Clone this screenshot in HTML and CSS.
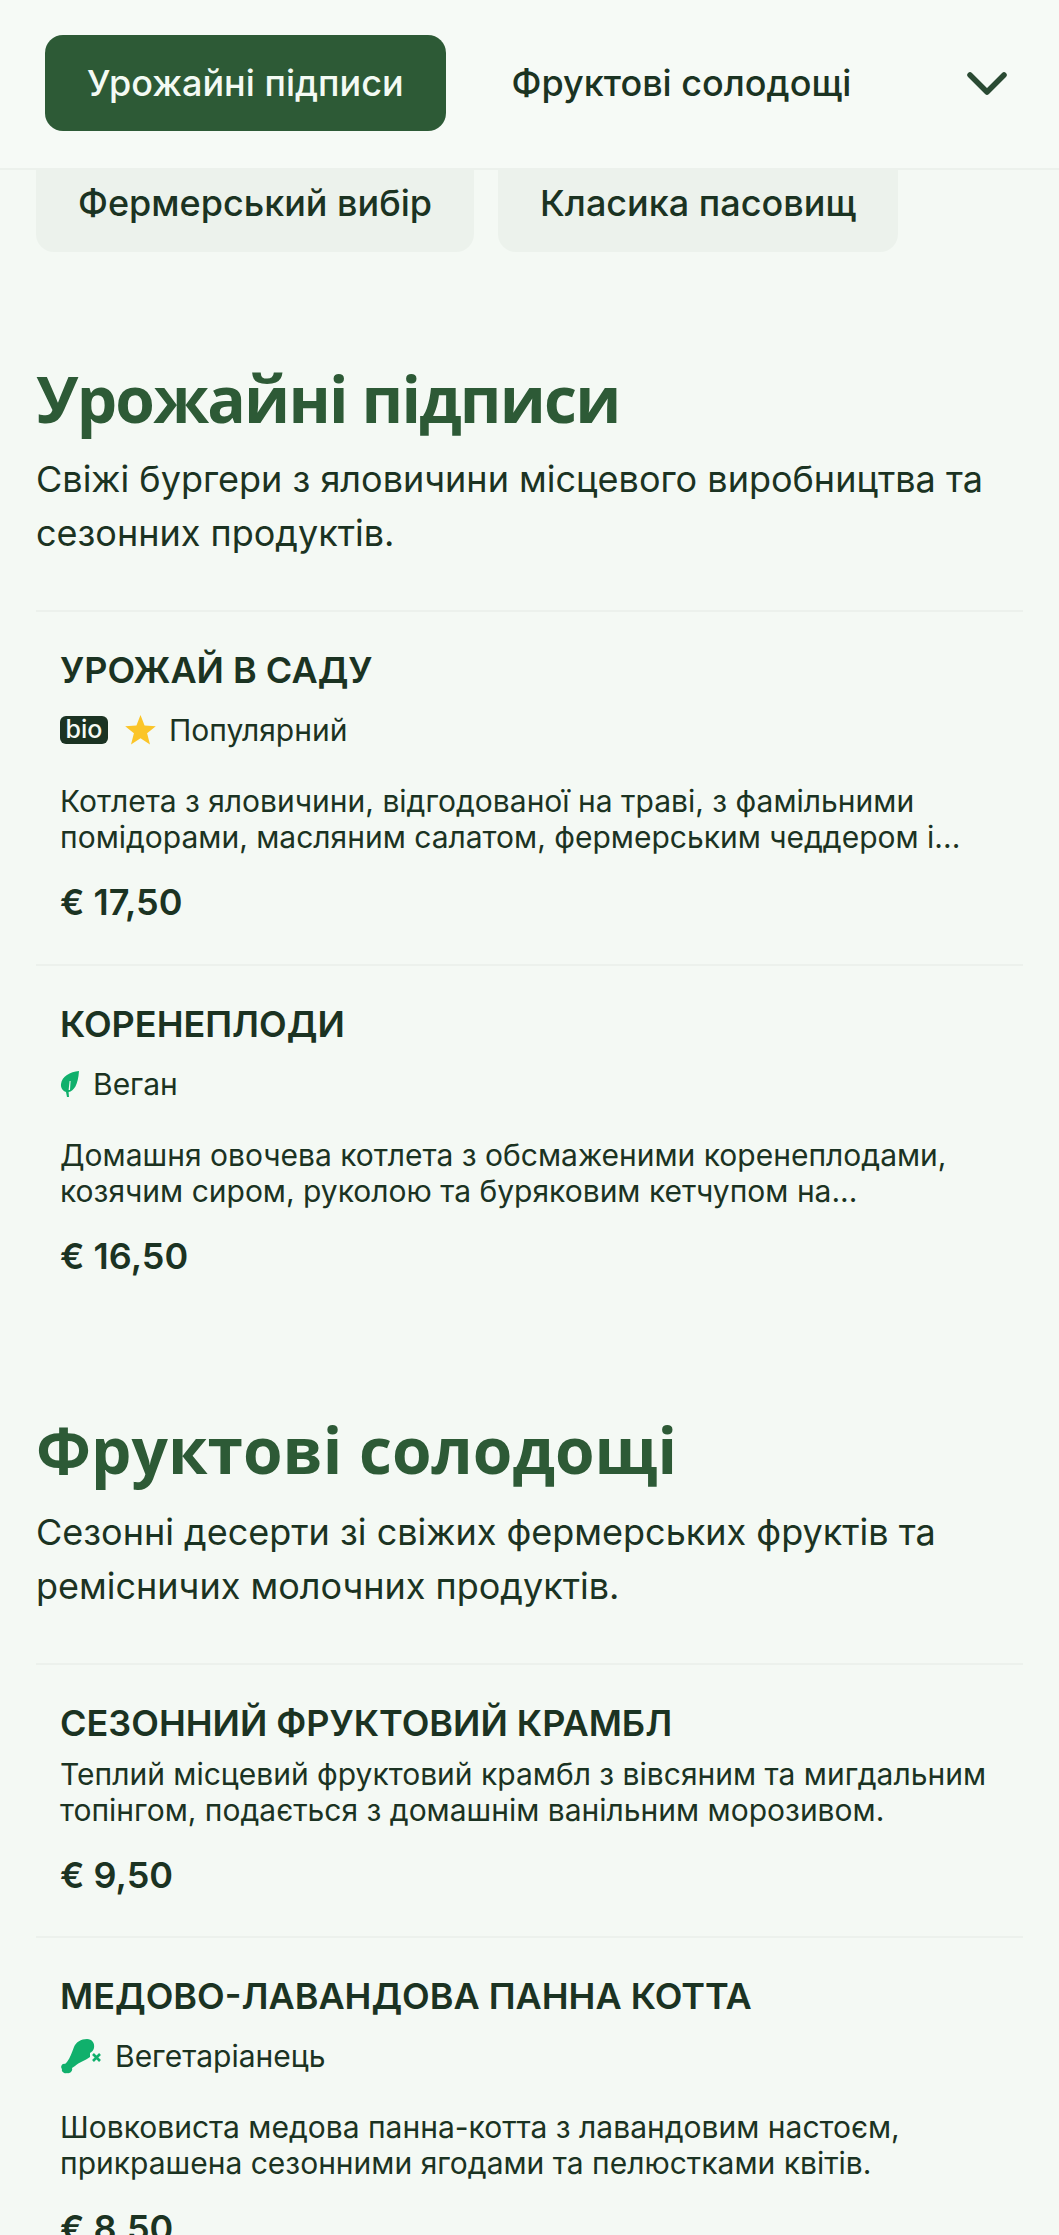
FILE: index.html
```html
<!DOCTYPE html>
<html lang="uk">
<head>
<meta charset="utf-8">
<title>Меню</title>
<link rel="stylesheet" href="styles.css">
</head>
<body>
<header class="topbar">
  <nav class="topnav">
    <a class="pill pill-active">Урожайні підписи</a>
    <a class="pill">Фруктові солодощі</a>
  </nav>
  <button class="chevron-btn" aria-label="Більше">
    <svg class="chevron" viewBox="0 0 40 23" width="40" height="23"><path d="M3 3 L20 20 L37 3" fill="none" stroke="#2a4a33" stroke-width="5.5" stroke-linecap="round" stroke-linejoin="round"/></svg>
  </button>
</header>
<div class="subtabs">
  <a class="subtab">Фермерський вибір</a>
  <a class="subtab">Класика пасовищ</a>
</div>
<main class="menu">
  <section class="section">
    <h2 class="section-title section-title-tight">Урожайні підписи</h2>
    <p class="section-desc">Свіжі бургери з яловичини місцевого виробництва та сезонних продуктів.</p>
    <article class="item">
      <h3 class="item-title">Урожай в саду</h3>
      <div class="tags">
        <span class="bio">bio</span>
        <span class="tag">
          <svg class="icon-star" viewBox="0 0 32 32" width="31" height="32"><path d="M16 0.500 L20.2 11.4 L31.8 12.2 L22.8 19.4 L25.8 31 L16 24.6 L6.200 31 L9.2 19.4 L0.200 12.2 L11.8 11.4 Z" fill="#fbc528"/></svg>
          Популярний
        </span>
      </div>
      <p class="item-desc">Котлета з яловичини, відгодованої на траві, з фамільними помідорами, масляним салатом, фермерським чеддером і...</p>
      <p class="price">€ 17,50</p>
    </article>
    <article class="item">
      <h3 class="item-title">Коренеплоди</h3>
      <div class="tags">
        <span class="tag">
          <svg class="icon-leaf" viewBox="0 0 20 28" width="20" height="28"><path d="M19 1 C10 2 2 6 1 14 C0.5 18 3 21 6 22 L7 27 L9 27 L8.6 22 C14 21 18 15 19 1 Z M8.6 20 L9.6 11 L10.6 11 L10 20 Z" fill="#10b06c" fill-rule="evenodd"/></svg>
          Веган
        </span>
      </div>
      <p class="item-desc">Домашня овочева котлета з обсмаженими коренеплодами, козячим сиром, руколою та буряковим кетчупом на...</p>
      <p class="price">€ 16,50</p>
    </article>
  </section>
  <section class="section">
    <h2 class="section-title">Фруктові солодощі</h2>
    <p class="section-desc">Сезонні десерти зі свіжих фермерських фруктів та ремісничих молочних продуктів.</p>
    <article class="item">
      <h3 class="item-title">Сезонний фруктовий крамбл</h3>
      <p class="item-desc item-desc-tight">Теплий місцевий фруктовий крамбл з вівсяним та мигдальним топінгом, подається з домашнім ванільним морозивом.</p>
      <p class="price price-tight">€ 9,50</p>
    </article>
    <article class="item">
      <h3 class="item-title">Медово-лавандова панна котта</h3>
      <div class="tags">
        <span class="tag">
          <svg class="icon-meat" viewBox="0 0 42 36" width="42" height="36"><path d="M27 1 C32 1 35 5 34 10 C33.500 12 32 14 30 15 L30 19 C25 23 19 24 15 28 L12 30 C13 33 10 36 7 35 C5 36 1 34 2 31 C0 29 2 25 5 26 L7 24 C10 20 12 14 14 9 C16 4 21 1 27 1 Z" fill="#10b06c"/><path d="M33 16 L40 23 M40 16 L33 23" stroke="#10b06c" stroke-width="2.6" fill="none"/></svg>
          Вегетаріанець
        </span>
      </div>
      <p class="item-desc">Шовковиста медова панна-котта з лавандовим настоєм, прикрашена сезонними ягодами та пелюстками квітів.</p>
      <p class="price">€ 8,50</p>
    </article>
  </section>
</main>
</body>
</html>
```

FILE: styles.css
```css
* { box-sizing: border-box; }
html, body {
  margin: 0;
  padding: 0;
  height: 100vh;
  overflow: hidden;
  background: #f4f9f4;
  font-family: Inter, "Liberation Sans", sans-serif;
  color: #1b3322;
}
.topbar {
  height: 170px;
  display: flex;
  align-items: center;
  justify-content: space-between;
  padding: 0 52px 2px 45px;
  background: #f6faf6;
  border-bottom: 2px solid #ecf1ec;
}
.topnav { display: flex; align-items: center; gap: 24px; }
.pill {
  display: block;
  height: 96px;
  line-height: 97px;
  padding: 0 42px;
  border-radius: 18px;
  font-size: 36px;
  font-weight: 500;
}
.pill-active { background: #2d5a36; color: #f4faf4; }
.chevron-btn { border: 0; background: none; padding: 0; display: flex; }
.subtabs {
  display: flex;
  gap: 24px;
  padding: 0 36px;
}
.subtab {
  display: block;
  height: 82px;
  line-height: 66px;
  padding: 0 42px;
  background: #ecf2ec;
  border-radius: 0 0 18px 18px;
  font-size: 36px;
  font-weight: 500;
}
.menu { padding: 0 36px; }
.section { padding-bottom: 48px; }
.section-title {
  margin: 0;
  padding-top: 41px;
  font-family: "Open Sans", sans-serif;
  font-weight: 700;
  font-size: 64px;
  line-height: 86px;
  color: #2d5a36;
}
.section-title-tight {
  padding-top: 104px;
  margin-bottom: -2px;
  letter-spacing: -1.8px;
}
.section-desc {
  margin: 12px 0 50px;
  font-size: 36px;
  line-height: 54px;
}
.item {
  border-top: 2px solid #ecf1ec;
  padding: 34px 24px 38px;
}
.item-title {
  margin: 0;
  font-size: 36px;
  font-weight: 600;
  line-height: 48px;
  text-transform: uppercase;
}
.tags {
  display: flex;
  align-items: center;
  gap: 17px;
  margin-top: 12px;
  height: 48px;
  font-size: 30px;
}
.tag { display: flex; align-items: center; gap: 13px; }
.bio {
  display: block;
  width: 48px;
  height: 28px;
  line-height: 26px;
  text-align: center;
  border-radius: 6px;
  background: #1b3322;
  color: #f5faf5;
  font-size: 25px;
  font-weight: 500;
}
.item-desc {
  margin: 29px 0 0;
  font-size: 30px;
  line-height: 36px;
}
.item-desc-tight { margin-top: 9px; }
.price {
  margin: 23px 0 0;
  font-size: 36px;
  font-weight: 600;
  line-height: 48px;
}
.price-tight { margin-bottom: -1px; }
```
